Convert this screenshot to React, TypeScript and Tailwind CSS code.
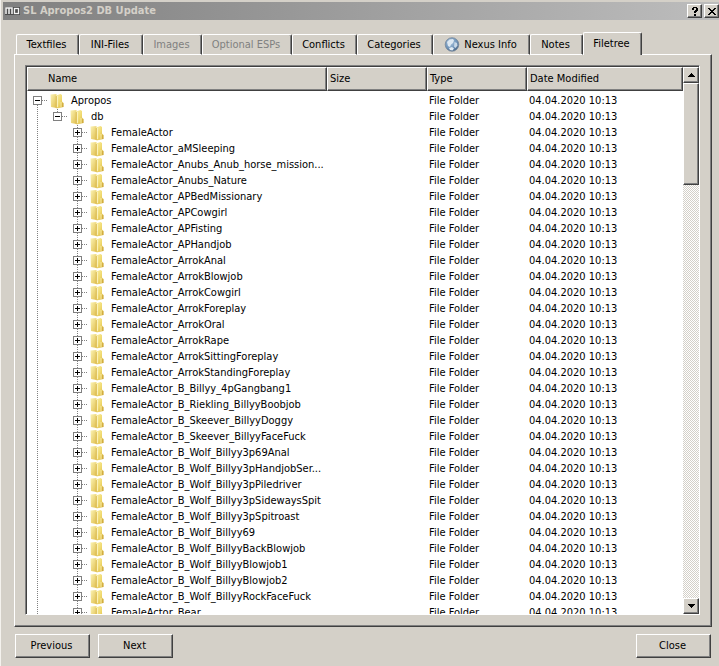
import { useState } from 'react'
import clsx from 'clsx'

// =============================================================================
// DATA
// =============================================================================

interface Tab {
  label: string
  width: string
  disabled?: boolean
  globe?: boolean
}

interface TreeRow {
  name: string
  depth: number
}

const TABS: Tab[] = [
  { label: 'Textfiles', width: 'w-[63px]' },
  { label: 'INI-Files', width: 'w-[64px]' },
  { label: 'Images', width: 'w-[59px]', disabled: true },
  { label: 'Optional ESPs', width: 'w-[90px]', disabled: true },
  { label: 'Conflicts', width: 'w-[65px]' },
  { label: 'Categories', width: 'w-[76px]' },
  { label: 'Nexus Info', width: 'w-[97px]', globe: true },
  { label: 'Notes', width: 'w-[53px]' },
  { label: 'Filetree', width: 'w-[59px]' },
]

const ANIMATIONS = [
  '',
  '_aMSleeping',
  '_Anubs_Anub_horse_mission...',
  '_Anubs_Nature',
  '_APBedMissionary',
  '_APCowgirl',
  '_APFisting',
  '_APHandjob',
  '_ArrokAnal',
  '_ArrokBlowjob',
  '_ArrokCowgirl',
  '_ArrokForeplay',
  '_ArrokOral',
  '_ArrokRape',
  '_ArrokSittingForeplay',
  '_ArrokStandingForeplay',
  '_B_Billyy_4pGangbang1',
  '_B_Riekling_BillyyBoobjob',
  '_B_Skeever_BillyyDoggy',
  '_B_Skeever_BillyyFaceFuck',
  '_B_Wolf_Billyy3p69Anal',
  '_B_Wolf_Billyy3pHandjobSer...',
  '_B_Wolf_Billyy3pPiledriver',
  '_B_Wolf_Billyy3pSidewaysSpit',
  '_B_Wolf_Billyy3pSpitroast',
  '_B_Wolf_Billyy69',
  '_B_Wolf_BillyyBackBlowjob',
  '_B_Wolf_BillyyBlowjob1',
  '_B_Wolf_BillyyBlowjob2',
  '_B_Wolf_BillyyRockFaceFuck',
  '_Bear',
]

const ROWS: TreeRow[] = [
  { name: 'Apropos', depth: 0 },
  { name: 'db', depth: 1 },
  ...ANIMATIONS.map((suffix) => ({ name: `FemaleActor${suffix}`, depth: 2 })),
]

// Classic 3D edge: light top/left, two-tone shadow bottom/right
const RAISED =
  'border border-t-white border-l-white border-r-[#404040] border-b-[#404040] shadow-[inset_-1px_-1px_0_#808080]'

// =============================================================================
// ICONS
// =============================================================================

function FolderIcon() {
  return (
    <svg width="16" height="16" viewBox="0 0 16 16" className="shrink-0" aria-hidden="true">
      <defs>
        <linearGradient id="folder-back" x1="0" y1="0" x2="1" y2="1">
          <stop offset="0" stopColor="#fbf3b4" />
          <stop offset="1" stopColor="#e0be4c" />
        </linearGradient>
        <linearGradient id="folder-front" x1="0" y1="0" x2="1" y2="1">
          <stop offset="0" stopColor="#faf0a8" />
          <stop offset="0.5" stopColor="#f0da70" />
          <stop offset="1" stopColor="#d3ac36" />
        </linearGradient>
      </defs>
      <path d="M1.500 1.500 7.500 1v14L2 14z" fill="url(#folder-back)" />
      <path d="M7 2.500 11.500 1l1.500 1v6.500l1.500 1.500v4L7.500 15.500z" fill="url(#folder-front)" />
      <path d="M7.300 3v12" stroke="#d4b248" strokeWidth="0.8" />
      <path d="M8.500 3v11" stroke="#fcf6c8" strokeWidth="0.8" />
      <path d="M12 9v5" stroke="#faf0b4" strokeWidth="0.8" />
      <path d="M13.800 10v4" stroke="#c9a236" strokeWidth="0.8" />
    </svg>
  )
}

function GlobeIcon() {
  return (
    <svg width="16" height="16" viewBox="0 0 16 16" className="shrink-0" aria-hidden="true">
      <defs>
        <radialGradient id="globe" cx="0.4" cy="0.35" r="0.65">
          <stop offset="0" stopColor="#a9c4de" />
          <stop offset="0.7" stopColor="#6f93b8" />
          <stop offset="1" stopColor="#4a6788" />
        </radialGradient>
      </defs>
      <circle cx="8" cy="7.500" r="6.800" fill="url(#globe)" stroke="#76889c" strokeWidth="0.8" />
      <path d="M3 5 5.500 2.500 9 2l1 1.500L9 6 7 7.500 6 10 4 9z" fill="#dde8f2" />
      <path d="M10.500 5 13 6l.5 2.500-2 2.500-1.500-1.500z" fill="#c9d8e6" />
      <path d="M5 11l3-1 2 1.500L8.500 13.500 6 13z" fill="#e2ebf3" />
    </svg>
  )
}

function AppIcon() {
  return (
    <svg width="15" height="8" viewBox="0 0 15 8" className="shrink-0" aria-hidden="true">
      <rect width="15" height="8" fill="#4c4c4c" />
      <path d="M1 7V1h6v6M4 1v6" fill="none" stroke="#f4f4f4" strokeWidth="1.5" />
      <rect x="9.500" y="1.500" width="4" height="5" fill="none" stroke="#f4f4f4" strokeWidth="1.3" />
    </svg>
  )
}

function Arrow({ up = false }: { up?: boolean }) {
  return (
    <svg width="7" height="4" viewBox="0 0 7 4" aria-hidden="true" shapeRendering="crispEdges">
      <path d={up ? 'M3 0h1v1h1v1h1v1h1v1H0V3h1V2h1V1h1z' : 'M0 0h7v1H6v1H5v1H4v1H3V3H2V2H1V1H0z'} />
    </svg>
  )
}

// Dotted connector lines plus the expand box of one tree level
function Branch({ above, below, box, open }: { above?: boolean; below?: boolean; box?: boolean; open?: boolean }) {
  return (
    <svg
      width="20"
      height="16"
      viewBox="0 0 20 16"
      className="shrink-0"
      aria-hidden="true"
      shapeRendering="crispEdges"
      stroke="#808080"
      fill="none"
    >
      {above && <path d="M10.500 0v8" strokeDasharray="1 1" />}
      {below && <path d="M10.500 8v8" strokeDasharray="1 1" />}
      {box && (
        <>
          <path d="M15 7.500h5" strokeDasharray="1 1" />
          <rect x="6.500" y="3.500" width="8" height="8" fill="#fff" />
          <path d={open ? 'M8 7.500h5' : 'M8 7.500h5M10.500 5v5'} stroke="#000" />
        </>
      )}
    </svg>
  )
}

// =============================================================================
// PARTS
// =============================================================================

function TitleBar() {
  return (
    <header className="mt-[2px] ml-[2px] flex h-[18px] shrink-0 items-center bg-linear-to-r from-[#808080] to-[#bdbdbd] pl-[2px]">
      <AppIcon />
      <h1 className="flex-1 pl-[3px] text-[11px] leading-4 font-bold text-[#d4d0c8]">SL Apropos2 DB Update</h1>
      <div className="flex gap-[2px]">
        <button aria-label="Help" className={clsx(RAISED, 'flex h-[14px] w-[15px] items-center justify-center bg-[#d4d0c8]')}>
          <svg width="6" height="9" viewBox="0 0 6 9" aria-hidden="true" shapeRendering="crispEdges">
            <path d="M1 0h4v1h1v3H5v1H4v1H2V4h1V3h1V1H2v2H0V1h1zM2 7h2v2H2z" />
          </svg>
        </button>
        <button aria-label="Close window" className={clsx(RAISED, 'flex h-[14px] w-[15px] items-center justify-center bg-[#d4d0c8]')}>
          <svg width="8" height="7" viewBox="0 0 8 7" aria-hidden="true" shapeRendering="crispEdges">
            <path d="M0 0h2v1h1v1h2V1h1V0h2v1H7v1H6v1H5v1h1v1h1v1h1v1H6V6H5V5H3v1H2v1H0V6h1V5h1V4h1V3H2V2H1V1H0z" />
          </svg>
        </button>
      </div>
    </header>
  )
}

function TabBar({ active, onSelect }: { active: string; onSelect: (label: string) => void }) {
  return (
    <div role="tablist" className="relative z-10 -mb-px flex h-[23px] items-end pl-[2px]">
      {TABS.map((tab) => {
        const selected = tab.label === active
        return (
          <button
            key={tab.label}
            role="tab"
            aria-selected={selected}
            disabled={tab.disabled}
            onClick={() => onSelect(tab.label)}
            className={clsx(
              'flex shrink-0 items-center justify-center gap-1 rounded-t-[2px] border-t border-r border-l border-t-white border-r-[#404040] border-l-white bg-[#d4d0c8] pr-[2px] whitespace-nowrap shadow-[inset_-1px_0_0_#808080]',
              tab.width,
              selected ? 'h-[23px]' : 'h-[21px] border-b border-b-white',
              tab.disabled && 'text-[#808080]',
            )}
          >
            {tab.globe && <GlobeIcon />}
            {tab.label}
          </button>
        )
      })}
    </div>
  )
}

function FileTable() {
  return (
    <table className="w-full table-fixed border-separate border-spacing-0">
      <colgroup>
        <col className="w-[300px]" />
        <col className="w-[100px]" />
        <col className="w-[100px]" />
        <col />
      </colgroup>
      <thead>
        <tr className="h-6 text-left">
          {['Name', 'Size', 'Type', 'Date Modified'].map((title, i) => (
            <th key={title} className={clsx(RAISED, 'bg-[#d4d0c8] p-0 font-normal', i === 0 ? 'pl-5' : 'pl-[2px]')}>
              {title}
            </th>
          ))}
        </tr>
      </thead>
      <tbody className="before:block before:h-[2px] before:content-['']">
        {ROWS.map((row, i) => (
          <tr key={row.name} className="h-4">
            <td className="p-0">
              <div className="flex h-4 items-center">
                {row.depth > 0 && <Branch above below />}
                {row.depth > 1 && <Branch />}
                <button aria-label={`Toggle ${row.name}`}>
                  <Branch box open={row.depth < 2} above={i > 0} below={row.depth !== 1} />
                </button>
                <span className="flex items-center gap-[6px] pl-[2px] whitespace-nowrap">
                  <FolderIcon />
                  {row.name}
                </span>
              </div>
            </td>
            <td className="p-0" />
            <td className="p-0 pl-[2px]">File Folder</td>
            <td className="p-0 pl-[2px]">04.04.2020 10:13</td>
          </tr>
        ))}
      </tbody>
    </table>
  )
}

function ScrollBar() {
  return (
    <div className="flex w-4 shrink-0 flex-col bg-[repeating-conic-gradient(#ffffff_0_25%,#d4d0c8_0_50%)] bg-size-[2px_2px]">
      <button aria-label="Scroll up" className={clsx(RAISED, 'flex h-4 items-center justify-center bg-[#d4d0c8]')}>
        <Arrow up />
      </button>
      <div className={clsx(RAISED, 'h-[102px] bg-[#d4d0c8]')} />
      <div className="flex-1" />
      <button aria-label="Scroll down" className={clsx(RAISED, 'flex h-4 items-center justify-center bg-[#d4d0c8]')}>
        <Arrow />
      </button>
    </div>
  )
}

function PushButton({ label }: { label: string }) {
  return <button className={clsx(RAISED, 'h-6 w-[75px] pr-[2px]')}>{label}</button>
}

// =============================================================================
// APP
// =============================================================================

export default function App() {
  const [tab, setTab] = useState('Filetree')

  return (
    <div className="flex h-screen flex-col overflow-hidden border-l border-l-[#f4f2ee] bg-[#d4d0c8] font-['DejaVu_Sans_Condensed','Noto_Sans',sans-serif] text-[11px] leading-4 text-black">
      <TitleBar />
      <main className="flex min-h-0 flex-1 flex-col pt-3 pr-[7px] pl-[13px]">
        <TabBar active={tab} onSelect={setTab} />
        <section className={clsx(RAISED, 'flex min-h-0 flex-1 p-[10px] pr-[11px] pb-[11px]')}>
          <div className="flex min-w-0 flex-1 border border-t-[#808080] border-r-white border-b-white border-l-[#808080] bg-white pt-px pl-px shadow-[inset_1px_1px_0_#404040]">
            <div className="min-w-0 flex-1 overflow-hidden">
              <FileTable />
            </div>
            <ScrollBar />
          </div>
        </section>
      </main>
      <footer className="flex shrink-0 gap-2 pt-[7px] pr-2 pb-2 pl-[14px]">
        <PushButton label="Previous" />
        <PushButton label="Next" />
        <div className="flex-1" />
        <PushButton label="Close" />
      </footer>
    </div>
  )
}
